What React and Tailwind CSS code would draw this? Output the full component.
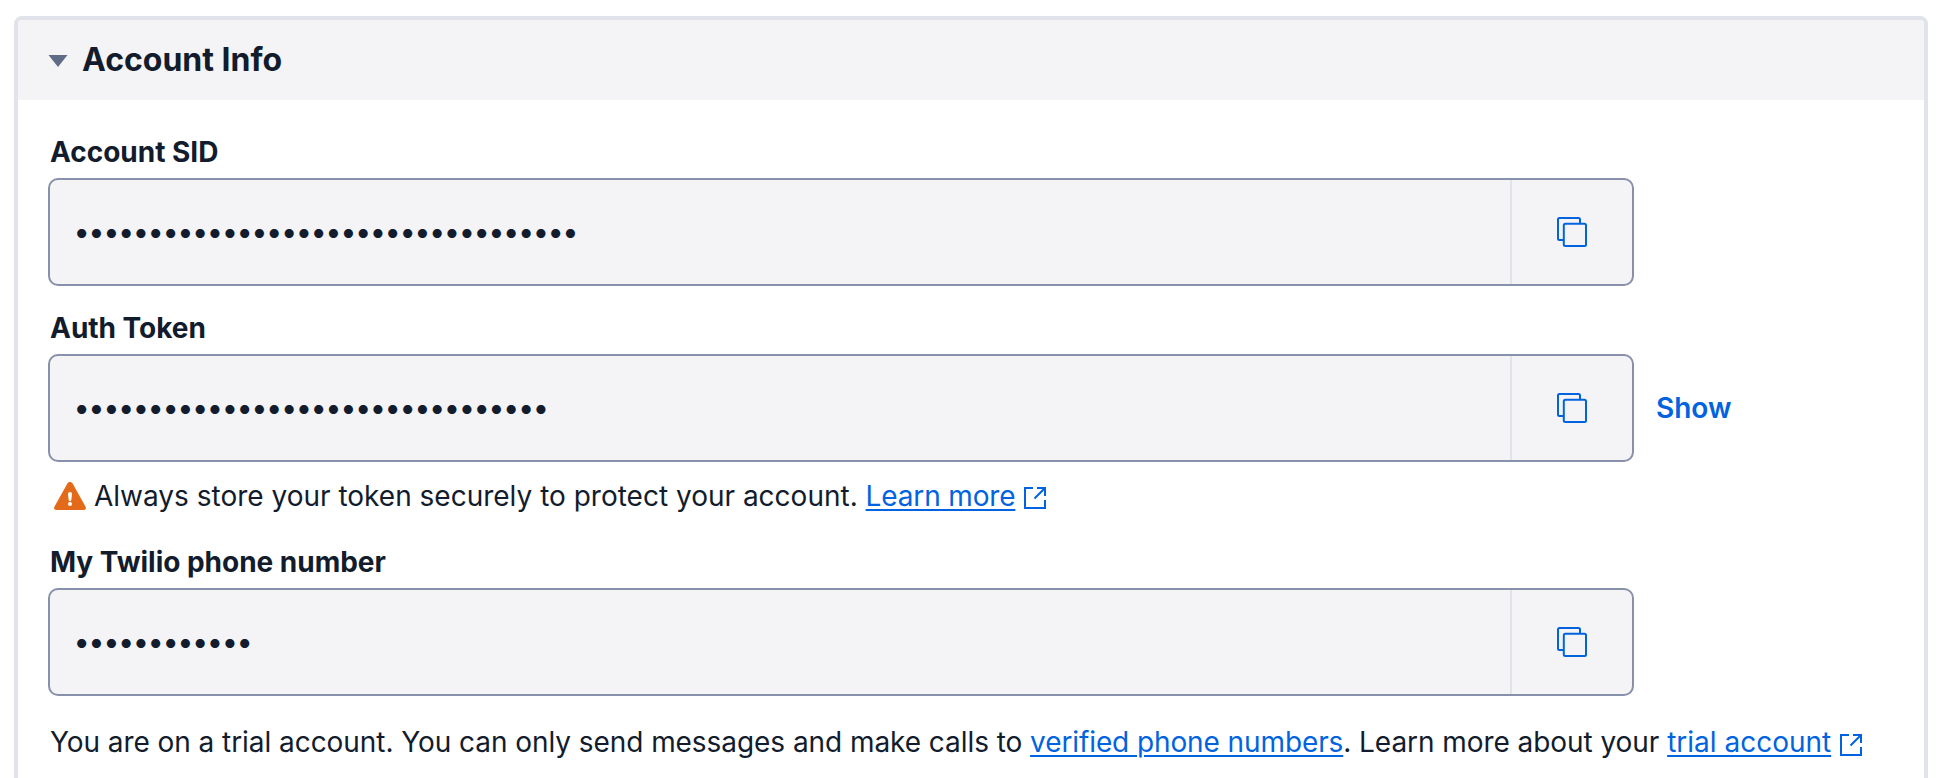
function CopyIcon() {
  return (
    <svg className="size-[30px]" viewBox="0 0 30 30" fill="none" stroke="#0263e0" strokeWidth="2">
      <path d="M6 23H2.5A1.5 1.5 0 0 1 1 21.5V2.5A1.5 1.5 0 0 1 2.5 1H21.5A1.5 1.5 0 0 1 23 2.5V6" />
      <rect x="6.8" y="6.8" width="22.2" height="22.2" rx="1.5" />
    </svg>
  );
}

function ExternalIcon() {
  return (
    <svg className="size-[22px] shrink-0" viewBox="0 0 22 22" fill="none" stroke="#0263e0" strokeWidth="2">
      <path d="M9 1H1V21H21V13" />
      <path d="M13 1H21V9M21 1L10.5 11.5" />
    </svg>
  );
}

function WarningIcon() {
  return (
    <svg className="h-7 w-8 shrink-0" viewBox="0 0 32 28">
      <path
        d="M13.4 1.5C14.6-.5 17.4-.5 18.6 1.5L31.6 24.8C32.5 26.4 31.7 28 29.8 28H2.2C.3 28-.5 26.4.4 24.8Z"
        fill="#e36a19"
      />
      <path d="M14 12a2 2 0 0 1 4 0l-.7 6a1.3 1.3 0 0 1-2.6 0Z" fill="#fff" />
      <circle cx="16" cy="22" r="2" fill="#fff" />
    </svg>
  );
}

function Field({ label, count, action }) {
  return (
    <div>
      <div className="h-[54px] pt-px pl-[2px] text-[28px] leading-[54px] font-bold tracking-[-0.02px]">{label}</div>
      <div className="flex items-center">
        <div className="flex h-[108px] w-[1586px] overflow-hidden rounded-[10px] border-2 border-[#8891aa] bg-[#f4f4f6]">
          <div className="flex flex-1 items-center pb-[2px] pl-[23.5px] text-[29px] leading-none tracking-[-1.5px]">
            {"•".repeat(count)}
          </div>
          <div className="flex w-[122px] items-center justify-center border-l-2 border-[#e1e3ea]">
            <CopyIcon />
          </div>
        </div>
        {action}
      </div>
    </div>
  );
}

const link = "text-[#0263e0] underline decoration-2 underline-offset-[3px]";

export default function App() {
  return (
    <div className="h-[778px] overflow-hidden bg-white pt-4 pl-[14px] font-[Inter,sans-serif] text-[#121c2d]">
      <section className="h-[800px] w-[1914px] overflow-hidden rounded-lg border-4 border-[#e1e3ea]">
        <header className="flex h-20 items-center bg-[#f4f4f6] pl-[30px]">
          <svg className="mt-[2px] h-3 w-5" viewBox="0 0 20 12">
            <path d="M.5 0H19.5L10 12Z" fill="#606b85" />
          </svg>
          <h2 className="ml-[14px] text-[32px] leading-none font-bold">Account Info</h2>
        </header>
        <div className="pt-6 pl-[30px]">
          <Field label="Account SID" count={34} />
          <div className="pt-[14px]">
            <Field
              label="Auth Token"
              count={32}
              action={<button className="ml-[22px] text-[28px] font-semibold text-[#0263e0]">Show</button>}
            />
          </div>
          <div className="flex h-[72px] items-center pb-1 pl-[6px] text-[28px] whitespace-pre">
            <WarningIcon />
            <span className="ml-2">Always store your token securely to protect your account. </span>
            <a className={`${link} tracking-[-0.15px]`}>Learn more</a>
            <span className="ml-[9px] pt-1"><ExternalIcon /></span>
          </div>
          <Field label="My Twilio phone number" count={12} />
          <div className="flex h-[92px] items-center pl-[2px] text-[28px] whitespace-pre">
            <span className="tracking-[-0.06px]">
              You are on a trial account. You can only send messages and make calls to{" "}
            </span>
            <a className={`${link} tracking-[-0.1px]`}>verified phone numbers</a>
            <span className="tracking-[-0.06px]">. Learn more about your </span>
            <a className={link}>trial account</a>
            <span className="ml-[9px] pt-[6px]"><ExternalIcon /></span>
          </div>
        </div>
      </section>
    </div>
  );
}
